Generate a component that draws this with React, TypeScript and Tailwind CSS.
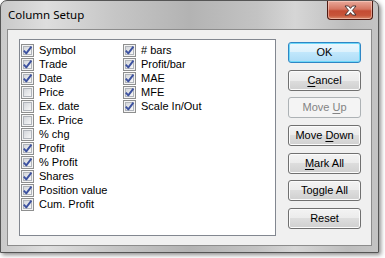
const col1: [string, boolean][] = [
  ['Symbol', true],
  ['Trade', true],
  ['Date', true],
  ['Price', false],
  ['Ex. date', false],
  ['Ex. Price', false],
  ['% chg', false],
  ['Profit', true],
  ['% Profit', true],
  ['Shares', true],
  ['Position value', true],
  ['Cum. Profit', true],
]

const col2: [string, boolean][] = [
  ['# bars', true],
  ['Profit/bar', true],
  ['MAE', true],
  ['MFE', true],
  ['Scale In/Out', true],
]

function CheckBox({ checked }: { checked: boolean }) {
  return (
    <span className="flex h-[13px] w-[13px] shrink-0 items-center justify-center border border-[#8e8f8f] bg-[#f4f4f4]">
      <span className="flex h-[9px] w-[9px] items-center justify-center border border-[#b0b4ba] bg-gradient-to-br from-[#d3d6db] to-[#f7f7f7]">
        {checked && (
          <svg className="h-[11px] w-[11px] shrink-0" viewBox="0 0 11 11" fill="none" aria-hidden="true">
            <path d="M1.8 5.6L4.3 8.4L9.4 1.6" stroke="#3d52a0" strokeWidth="1.9" strokeLinejoin="round" />
          </svg>
        )}
      </span>
    </span>
  )
}

function Row({ label, checked }: { label: string; checked: boolean }) {
  return (
    <div className="flex h-[14px] items-center gap-[5px]">
      <CheckBox checked={checked} />
      <span className="leading-none">{label}</span>
    </div>
  )
}

type Kind = 'default' | 'normal' | 'disabled'

function Btn({ kind = 'normal', children }: { kind?: Kind; children: React.ReactNode }) {
  const cls =
    kind === 'default'
      ? 'border-[#2f86c4] bg-[linear-gradient(to_bottom,#ecf7fd_0%,#dcf1fc_50%,#c1e7fc_50%,#addcf6_100%)] shadow-[inset_0_0_0_1px_#6fd8f8] text-black'
      : kind === 'disabled'
        ? 'border-[#adb2b5] bg-[#f4f4f4] text-[#838383]'
        : 'border-[#707070] bg-[linear-gradient(to_bottom,#f3f3f3_0%,#ebebeb_50%,#dddddd_50%,#d0d0d0_100%)] shadow-[inset_0_0_0_1px_#fbfbfb] text-black'
  return (
    <div className={`flex h-[21px] w-[73px] items-center justify-center rounded-[3px] border ${cls}`}>
      <span className="leading-none">{children}</span>
    </div>
  )
}

function U({ children }: { children: React.ReactNode }) {
  return <span className="underline underline-offset-[2px]">{children}</span>
}

export default function App() {
  return (
    <div className="h-[258px] w-[385px] bg-white">
      <div className="flex h-[253px] w-[379px] flex-col rounded-t-[7px] border border-[#555555] bg-[linear-gradient(to_right,#c9c9c9_0%,#dedede_12%,#c6c6c6_30%,#b3b3b3_50%,#c3c3c3_68%,#d6d6d6_78%,#bdbdbd_92%,#c4c4c4_100%)] shadow-[2px_2px_4px_rgba(0,0,0,0.45)]">
        <div className="flex h-[28px] shrink-0 items-start justify-between pl-[7px] pr-[5px]">
          <span
            className="mt-[6px] text-[11.5px] leading-[16px] text-black"
            style={{ fontFamily: '"Noto Sans", "Open Sans", sans-serif' }}
          >
            Column Setup
          </span>
          <div className="flex h-[19px] w-[46px] items-center justify-center rounded-b-[4px] border border-t-0 border-[#4d1a12] bg-[linear-gradient(to_bottom,#e9a99a_0%,#d57662_45%,#c44c33_55%,#c7553a_80%,#d88a6b_100%)] shadow-[inset_0_0_0_1px_rgba(255,220,210,0.5)]">
            <svg className="h-[11px] w-[15px]" viewBox="0 0 15 11" aria-hidden="true">
              <path
                d="M2 1L5.5 1L7.5 3.4L9.5 1L13 1L9.3 5.5L13 10L9.5 10L7.5 7.6L5.5 10L2 10L5.7 5.5Z"
                fill="#ffffff"
                stroke="#3a2a2a"
                strokeWidth="0.9"
                strokeLinejoin="round"
              />
            </svg>
          </div>
        </div>
        <div
          className="mx-[6px] flex h-[217px] border border-[#8c8c8c] bg-[#f0f0f0] pl-[11px] pr-[10px] pt-[9px] text-[11px] text-black"
          style={{ fontFamily: '"Liberation Sans", Arial, sans-serif' }}
        >
          <div className="flex h-[197px] w-[257px] shrink-0 border border-[#828790] bg-white pl-[1px] pt-[3px]">
            <div className="flex w-[102px] flex-col">
              {col1.map(([label, checked]) => (
                <Row key={label} label={label} checked={checked} />
              ))}
            </div>
            <div className="flex flex-col">
              {col2.map(([label, checked]) => (
                <Row key={label} label={label} checked={checked} />
              ))}
            </div>
          </div>
          <div className="ml-auto flex flex-col gap-[6.7px] pt-[3px]">
            <Btn kind="default">OK</Btn>
            <Btn>
              <U>C</U>ancel
            </Btn>
            <Btn kind="disabled">
              Move <U>U</U>p
            </Btn>
            <Btn>
              Move <U>D</U>own
            </Btn>
            <Btn>
              <U>M</U>ark All
            </Btn>
            <Btn>Toggle All</Btn>
            <Btn>Reset</Btn>
          </div>
        </div>
      </div>
    </div>
  )
}
